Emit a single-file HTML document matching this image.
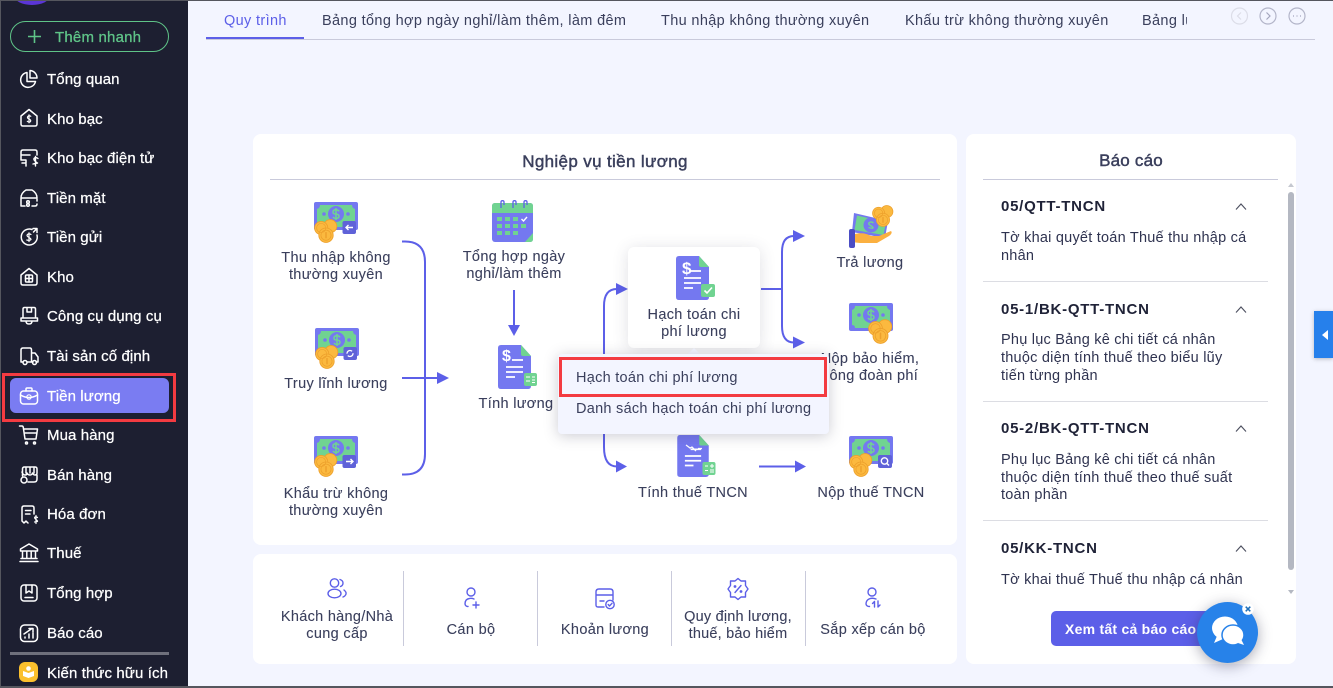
<!DOCTYPE html>
<html lang="vi"><head><meta charset="utf-8"><title>Tiền lương</title>
<style>
*{box-sizing:border-box}
html,body{margin:0;padding:0;width:1333px;height:688px;overflow:hidden;background:#f3f5ff}
body{font-family:"Liberation Sans",sans-serif;font-size:14.5px;color:#3a3f5c;position:relative}
.a{position:absolute}
.t{position:absolute;white-space:nowrap;line-height:20px;height:20px;letter-spacing:.35px}
.c{position:absolute;white-space:nowrap;line-height:20px;height:20px;width:240px;text-align:center;letter-spacing:.33px;-webkit-text-stroke:.1px}
.s{color:#fff;left:47px;margin-top:1px;font-size:15px;-webkit-text-stroke:.25px #fff;letter-spacing:.1px}
.b{-webkit-text-stroke:.3px}
.i{position:absolute;left:18px;width:22px;height:22px;fill:none;stroke:#fff;stroke-width:1.5;stroke-linecap:round;stroke-linejoin:round}
.tab{top:11px;color:#3a3f5c}
.h{color:#1f2237;font-weight:bold;font-size:15px;letter-spacing:.75px;left:1001px}
.d{left:1001px;color:#2f3350;letter-spacing:.23px}
.bi{position:absolute;fill:none;stroke:#5c5fe8;stroke-width:1.4;stroke-linecap:round;stroke-linejoin:round}
</style></head><body>

<svg width="0" height="0" style="position:absolute">
<defs>
<symbol id="coins" viewBox="0 0 20 20" overflow="visible">
<g stroke="#eda02c" stroke-width=".7" fill="#fbb93f"><circle cx="13.500" cy="6" r="5.500"/><circle cx="6" cy="7.500" r="5.500"/><circle cx="10" cy="13.500" r="6"/></g>
<g fill="none" stroke="#eda02c" stroke-width=".6"><circle cx="10" cy="13.500" r="4.200"/><circle cx="6" cy="7.500" r="3.800"/></g>
<rect x="9.400" y="10.800" width="1.200" height="5.400" rx=".6" fill="#eda02c"/>
</symbol>
<symbol id="cash" viewBox="0 0 44 28">
<rect width="44" height="28" rx="2" fill="#7478f0"/>
<path d="M6 3H38Q38 6 41 7V22Q38 22 38 25H6Q6 22 3 22V7Q6 6 6 3Z" fill="#70d391"/>
<circle cx="22" cy="12" r="8" fill="#7478f0"/><circle cx="10" cy="12" r="1.800" fill="#7478f0"/><circle cx="34" cy="12" r="1.800" fill="#7478f0"/>
<path d="M25 9.300Q24 7.800 22 7.800Q19 7.800 19 10T22 12Q25 12.300 25 14.300T22 16.500Q20 16.500 19 15M22 6V18" fill="none" stroke="#70d391" stroke-width="1.500"/>
</symbol>
<symbol id="doc" viewBox="0 0 33 44">
<path d="M3 0H23L33 11V41Q33 44 30 44H3Q0 44 0 41V3Q0 0 3 0Z" fill="#7478f0"/>
<path d="M23 0L33 11H25Q23 11 23 9Z" fill="#70d391"/>
<g stroke="#fff" stroke-width="1.800"><path d="M14 15H25M8 22H25M8 27H25M8 32H17" fill="none"/></g>
</symbol>
</defs>
</svg>

<!-- window frame -->
<div class="a" style="left:0;top:0;width:1333px;height:1px;background:#55565e;z-index:9"></div>
<div class="a" style="left:0;top:686px;width:1333px;height:2px;background:#55565e;z-index:9"></div>
<div class="a" style="left:0;top:0;width:1px;height:688px;background:#55565e;z-index:9"></div>

<!-- SIDEBAR -->
<div class="a" style="left:0;top:0;width:188px;height:688px;background:#1d1f31"></div>
<div class="a" style="left:14px;top:-14px;width:36px;height:19px;border-radius:50%;background:#5b35d6"></div>
<div class="a" style="left:10px;top:21px;width:159px;height:31px;border:1.500px solid #5fc488;border-radius:16px"></div>
<svg class="a" style="left:27px;top:29px" width="15" height="15"><path d="M7.500 1V14M1 7.500H14" stroke="#5fc488" stroke-width="1.600" fill="none"/></svg>
<div class="t b" style="left:55px;top:28px;color:#5fc488;font-size:15px;letter-spacing:.2px">Thêm nhanh</div>

<div class="a" style="left:10px;top:378px;width:159px;height:35px;border-radius:6px;background:#7a7cf2"></div>
<div class="a" style="left:2px;top:373px;width:174px;height:49px;border:3px solid #f33b41"></div>

<svg class="i" style="top:68px" viewBox="0 0 22 22"><path d="M9 4.500A7.500 7.500 0 1 0 17.500 13.500H9Z"/><path d="M12 2.500A7.500 7.500 0 0 1 19 10H12Z"/></svg>
<div class="t s" style="top:69px">Tổng quan</div>
<svg class="i" style="top:107px" viewBox="0 0 22 22"><path d="M3 9L11 2.500L19 9V17Q19 19 17 19H5Q3 19 3 17Z"/><path d="M12.800 9.300Q11 8 9.800 9.500T11 12T12.500 14.500T9.300 14.300M11 7.800V15.800" stroke-width="1.200"/></svg>
<div class="t s" style="top:109px">Kho bạc</div>
<svg class="i" style="top:147px" viewBox="0 0 22 22"><path d="M4 16H8V13H3V5Q3 3 5 3H17Q19 3 19 5V8M3 8H12M8 17V19"/><path d="M20 11.500Q18 10 16.500 11T17 14T19.500 16T15 17M17.500 9.500V19" stroke-width="1.400"/></svg>
<div class="t s" style="top:148px">Kho bạc điện tử</div>
<svg class="i" style="top:187px" viewBox="0 0 22 22"><path d="M3 11Q3 6 8 3H14Q19 6 19 11M3 11H19M3 11V19H7M14 19H17Q19 19 19 17M19 12V14"/><circle cx="10" cy="15" r="1.300"/><circle cx="10" cy="18" r="1.300"/></svg>
<div class="t s" style="top:188px">Tiền mặt</div>
<svg class="i" style="top:226px" viewBox="0 0 22 22"><path d="M14 3.500A8 8 0 1 0 19 9M15 2.500L19 2.500V6.500M19 2.500L15.500 6"/><path d="M13 8.500Q11 7.300 9.500 8.500T11 11.500T12.500 14T8.800 14M11 6.800V15.500" stroke-width="1.200"/></svg>
<div class="t s" style="top:227px">Tiền gửi</div>
<svg class="i" style="top:266px" viewBox="0 0 22 22"><path d="M3 9L11 2.500L19 9V17Q19 19 17 19H5Q3 19 3 17Z"/><rect x="7.500" y="9" width="7" height="7" rx="1"/><path d="M11 9V16M7.500 12.500H14.500"/></svg>
<div class="t s" style="top:267px">Kho</div>
<svg class="i" style="top:305px" viewBox="0 0 22 22"><path d="M5 13V4Q5 2.500 6.500 2.500H16Q17.500 2.500 17.500 4V13M9 2.500V7H13.500V2.500M3 13H19.500V16H3ZM8 16Q8 19 11 19T14 16"/></svg>
<div class="t s" style="top:306px">Công cụ dụng cụ</div>
<svg class="i" style="top:345px" viewBox="0 0 22 22"><path d="M5 17H3V5Q3 3 5 3H12Q13.500 3 13.500 5V17H9M13.500 8H17L20 12V17H18M13.500 17H15"/><circle cx="7" cy="17.500" r="2"/><circle cx="16.500" cy="17.500" r="2"/></svg>
<div class="t s" style="top:346px">Tài sản cố định</div>
<svg class="i" style="top:385px" viewBox="0 0 22 22"><rect x="2.500" y="6" width="17" height="13" rx="3"/><path d="M8 6V4Q8 3 9 3H13Q14 3 14 4V6M2.500 10Q11 15 19.500 10"/><circle cx="11" cy="12" r="2.200" stroke-width="1.100"/></svg>
<div class="t s" style="top:386px">Tiền lương</div>
<svg class="i" style="top:424px" viewBox="0 0 22 22"><path d="M1.500 2H4Q5 2 5.300 3.500L7 15H18L19.500 5H5.500M7 9H19"/><circle cx="8.500" cy="19" r="1"/><circle cx="16.500" cy="19" r="1"/></svg>
<div class="t s" style="top:425px">Mua hàng</div>
<svg class="i" style="top:464px" viewBox="0 0 22 22"><path d="M4.500 12V5Q4.500 3 6.500 3H17Q19 3 19 5V9Q19 11 17 11T14.500 9Q14 11 12 11T9 9Q9 11 7 11T4 8M8 3V9M12 3V9M16 3V9M19 11V15Q19 18 16 18H10"/><circle cx="6" cy="16" r="3"/></svg>
<div class="t s" style="top:465px">Bán hàng</div>
<svg class="i" style="top:503px" viewBox="0 0 22 22"><path d="M4 18V5Q4 3 6 3H14Q16 3 16 5V11M4 18L6 20L8 18L10 20M7.500 7.500H13M7.500 11H12"/><path d="M19.500 14.500Q18 13.300 17 14T17.500 16T19.500 18T16.500 19M18 12.500V20.500" stroke-width="1.200"/></svg>
<div class="t s" style="top:504px">Hóa đơn</div>
<svg class="i" style="top:542px" viewBox="0 0 22 22"><path d="M11 2L19.500 7V9H2.500V7ZM4.500 9.500V16M8.800 9.500V16M13.200 9.500V16M17.500 9.500V16M3 16.500H19M2 19.500H20"/></svg>
<div class="t s" style="top:543px">Thuế</div>
<svg class="i" style="top:582px" viewBox="0 0 22 22"><rect x="3" y="3" width="16" height="16" rx="3"/><path d="M8 3V11L11 9L14 11V3M7 15.500H15"/></svg>
<div class="t s" style="top:583px">Tổng hợp</div>
<svg class="i" style="top:622px" viewBox="0 0 22 22"><rect x="2.500" y="3" width="17" height="16.500" rx="4"/><path d="M6 12L14 6.500M11 6.500H15V10M7 16V15M11 16V12M15 16V11"/></svg>
<div class="t s" style="top:623px">Báo cáo</div>
<div class="a" style="left:10px;top:652px;width:159px;height:3px;background:#6f707c"></div>
<div class="a" style="left:19px;top:662px;width:19px;height:20px;border-radius:6px;background:#fbc02d"></div>
<svg class="a" style="left:19px;top:662px" width="19" height="20"><path d="M4 9L9.500 11V16L4 14ZM15 9L9.500 11V16L15 14Z" fill="#fff"/><circle cx="9.500" cy="6.500" r="2.300" fill="#fff"/></svg>
<div class="t s" style="top:663px">Kiến thức hữu ích</div>

<!-- TABS -->
<div class="a" style="left:206px;top:39px;width:1109px;height:1px;background:#c9cadb"></div>
<div class="a" style="left:206px;top:37px;width:98px;height:2px;background:#5c5fe8"></div>
<div class="t tab" style="left:224px;color:#5c5fe8">Quy trình</div>
<div class="t tab" style="left:322px">Bảng tổng hợp ngày nghỉ/làm thêm, làm đêm</div>
<div class="t tab" style="left:661px">Thu nhập không thường xuyên</div>
<div class="t tab" style="left:905px">Khấu trừ không thường xuyên</div>
<div class="a" style="left:1142px;top:11px;width:45px;height:20px;overflow:hidden"><div class="t" style="left:0;top:0">Bảng lương</div></div>
<svg class="a" style="left:1230px;top:7px" width="90" height="18" fill="none" stroke-width="1.200">
<circle cx="9.500" cy="9" r="8" stroke="#dcdde8"/><path d="M11 5.500L7.500 9L11 12.500" stroke="#dcdde8"/>
<circle cx="38" cy="9" r="8" stroke="#b3b5c9"/><path d="M36.500 5.500L40 9L36.500 12.500" stroke="#a3a5bd"/>
<circle cx="67" cy="9" r="8" stroke="#b3b5c9"/><path d="M63 9H64M66.500 9H67.500M70 9H71" stroke="#a3a5bd"/>
</svg>

<!-- CARDS -->
<div class="a" style="left:253px;top:134px;width:704px;height:411px;background:#fff;border-radius:8px"></div>
<div class="a" style="left:253px;top:554px;width:704px;height:110px;background:#fff;border-radius:8px"></div>
<div class="a" style="left:966px;top:134px;width:330px;height:530px;background:#fff;border-radius:8px"></div>

<div class="c" style="left:485px;top:152px;font-size:17px;letter-spacing:.35px;-webkit-text-stroke:.45px #3a3f5c">Nghiệp vụ tiền lương</div>
<div class="a" style="left:270px;top:179px;width:670px;height:1px;background:#c9cadb"></div>

<!-- connectors -->
<svg class="a" style="left:253px;top:134px" width="704" height="411" fill="none" stroke="#5c5fe8" stroke-width="2">
<g transform="translate(-253 -134)">
<path d="M402 241.500H405Q425 241.500 425 262V454Q425 474.500 405 474.500H402"/>
<path d="M402 378H438"/><path d="M437 372L449 378L437 384Z" fill="#5c5fe8" stroke="none"/>
<path d="M514 290V326"/><path d="M508 325H520L514 336Z" fill="#5c5fe8" stroke="none"/>
<path d="M604 360V306Q604 289 617 289"/><path d="M616 283L628 289L616 295Z" fill="#5c5fe8" stroke="none"/>
<path d="M604 430V447Q604 466.500 617 466.500"/><path d="M616 460.500L627 466.500L616 472.500Z" fill="#5c5fe8" stroke="none"/>
<path d="M761 289H782"/>
<path d="M794 236Q782 236 782 252V326Q782 342.500 794 342.500"/>
<path d="M793 230L805 236L793 242Z" fill="#5c5fe8" stroke="none"/><path d="M793 336.500L805 342.500L793 348.500Z" fill="#5c5fe8" stroke="none"/>
<path d="M759 466.500H796"/><path d="M795 460.500L806 466.500L795 472.500Z" fill="#5c5fe8" stroke="none"/>
</g></svg>

<!-- highlighted card -->
<div class="a" style="left:628px;top:247px;width:132px;height:101px;background:#fff;border-radius:6px;box-shadow:0 2px 16px rgba(60,60,90,.16)"></div>

<!-- diagram icons -->
<svg class="a" style="left:314px;top:202px" width="44" height="42" overflow="visible">
<use href="#cash" width="44" height="28"/><use href="#coins" x="0" y="17" width="24" height="24"/>
<rect x="28.500" y="19" width="13.500" height="13" rx="2" fill="#5f62d8"/><path d="M39 25.500H32M34.500 23L32 25.500L34.500 28" stroke="#fff" stroke-width="1.400" fill="none"/></svg>
<svg class="a" style="left:315px;top:328px" width="44" height="42" overflow="visible">
<use href="#cash" width="44" height="28"/><use href="#coins" x="0" y="17" width="24" height="24"/>
<rect x="28.500" y="19" width="13.500" height="13" rx="2" fill="#5f62d8"/><circle cx="35" cy="25.500" r="3" fill="none" stroke="#fff" stroke-width="1.300" stroke-dasharray="7 2"/></svg>
<svg class="a" style="left:314px;top:436px" width="44" height="42" overflow="visible">
<use href="#cash" width="44" height="28"/><use href="#coins" x="0" y="17" width="24" height="24"/>
<rect x="28.500" y="19" width="13.500" height="13" rx="2" fill="#5f62d8"/><path d="M32 25.500H39M36.500 23L39 25.500L36.500 28" stroke="#fff" stroke-width="1.400" fill="none"/></svg>

<svg class="a" style="left:492px;top:200px" width="42" height="42">
<rect x="0" y="3" width="41" height="39" rx="3" fill="#7478f0"/><path d="M0 13V6Q0 3 3 3H38Q41 3 41 6V13Z" fill="#70d391"/>
<g fill="none" stroke="#5c5fe8" stroke-width="1.300"><path d="M10 8V2Q10 0.700 11.500 0.700T13 2V5M22 8V2Q22 0.700 23.500 0.700T25 2V5M33 8V2Q33 0.700 34.500 0.700T36 2V5" transform="translate(-1 0)"/></g>
<g fill="#70d391"><rect x="5" y="17" width="5" height="4"/><rect x="13" y="17" width="5" height="4"/><rect x="21" y="17" width="5" height="4"/><rect x="5" y="24" width="5" height="4"/><rect x="13" y="24" width="5" height="4"/><rect x="21" y="24" width="5" height="4"/><rect x="29" y="24" width="5" height="4"/><rect x="5" y="31" width="5" height="4"/><rect x="13" y="31" width="5" height="4"/><rect x="21" y="31" width="5" height="4"/></g>
<path d="M29.500 19L31.500 21L35 17" stroke="#fff" stroke-width="1.400" fill="none"/><path d="M41 33V39Q41 42 38 42H33Z" fill="#70d391"/></svg>

<svg class="a" style="left:498px;top:345px" width="40" height="44" overflow="visible">
<use href="#doc" width="33" height="44"/><text x="4" y="16" font-size="16" font-weight="bold" fill="#fff" font-family="Liberation Sans">$</text>
<rect x="26" y="28" width="13" height="13" rx="2" fill="#70d391"/><path d="M28 32H32M34 32H37M28 36H32M34 35H37M34 37.500H37" stroke="#fff" stroke-width="1"/></svg>

<svg class="a" style="left:676px;top:256px" width="40" height="44" overflow="visible">
<use href="#doc" width="33" height="44"/><text x="6" y="18" font-size="17" font-weight="bold" fill="#fff" font-family="Liberation Sans">$</text>
<rect x="25" y="28" width="14" height="13" rx="2" fill="#70d391"/><path d="M28.500 34.500L31 37L36 31.500" stroke="#fff" stroke-width="1.600" fill="none"/></svg>

<svg class="a" style="left:849px;top:205px" width="46" height="46" overflow="visible">
<path d="M5 8L39 16L36 33L3 27Z" fill="#7478f0"/><path d="M8 10.500L37 17L34.500 30L5.500 25Z" fill="#70d391"/>
<circle cx="22" cy="20" r="7.500" fill="#7478f0"/><path d="M24.500 18Q22.500 16.300 20.500 17.500T21.500 20.500T24 23T19.500 22.500" stroke="#70d391" fill="none" stroke-width="1.400"/>
<path d="M2 30Q14 26 22 31H30L42 26Q44 28 40 31L28 38H11L2 37Z" fill="#fbb040"/>
<rect x="0" y="24" width="6" height="19" rx="2" fill="#4b4dc4"/>
<use href="#coins" x="23" y="0" width="22" height="22"/></svg>

<svg class="a" style="left:849px;top:303px" width="44" height="42" overflow="visible">
<use href="#cash" width="44" height="28"/><use href="#coins" x="19" y="16" width="25" height="25"/></svg>

<svg class="a" style="left:677px;top:435px" width="40" height="44" overflow="visible">
<use href="#doc" width="32" height="42"/><path d="M9 10L13 13L15 12L19 16M21 13.500H25" stroke="#fff" stroke-width="1.300" fill="none"/>
<rect x="25.500" y="27" width="13" height="13" rx="2" fill="#70d391"/><path d="M28 31H31M33 31H37M35 29V33M28 35.500H31M33 35H37M33 37H37" stroke="#fff" stroke-width="1"/></svg>

<svg class="a" style="left:849px;top:436px" width="44" height="42" overflow="visible">
<use href="#cash" width="44" height="28"/><use href="#coins" x="0" y="17" width="24" height="24"/>
<rect x="29" y="19" width="14" height="13" rx="2" fill="#5f62d8"/><circle cx="35.500" cy="25" r="3.200" fill="none" stroke="#fff" stroke-width="1.400"/><path d="M38 27.500L40 29.500" stroke="#fff" stroke-width="1.400"/></svg>

<!-- diagram labels -->
<div class="c" style="left:216px;top:248px">Thu nhập không</div>
<div class="c" style="left:216px;top:265px">thường xuyên</div>
<div class="c" style="left:216px;top:374px">Truy lĩnh lương</div>
<div class="c" style="left:216px;top:484px">Khẩu trừ không</div>
<div class="c" style="left:216px;top:501px">thường xuyên</div>
<div class="c" style="left:394px;top:247px">Tổng hợp ngày</div>
<div class="c" style="left:394px;top:264px">nghỉ/làm thêm</div>
<div class="c" style="left:396px;top:394px">Tính lương</div>
<div class="c" style="left:574px;top:305px">Hạch toán chi</div>
<div class="c" style="left:574px;top:322px">phí lương</div>
<div class="c" style="left:750px;top:253px">Trả lương</div>
<div class="c" style="left:750px;top:349px">Nộp bảo hiểm,</div>
<div class="c" style="left:750px;top:366px">công đoàn phí</div>
<div class="c" style="left:573px;top:483px">Tính thuế TNCN</div>
<div class="c" style="left:751px;top:483px">Nộp thuế TNCN</div>

<!-- popup -->
<div class="a" style="left:687px;top:348px;width:0;height:0;border-left:7px solid transparent;border-right:7px solid transparent;border-bottom:7px solid #f3f5ff"></div>
<div class="a" style="left:558px;top:354px;width:271px;height:80px;background:#f3f5ff;border-radius:4px;box-shadow:0 2px 14px rgba(50,50,80,.25)"></div>
<div class="a" style="left:559px;top:357px;width:268px;height:40px;border:3px solid #f33b41"></div>
<div class="t" style="left:576px;top:368px;letter-spacing:.27px">Hạch toán chi phí lương</div>
<div class="t" style="left:576px;top:399px;letter-spacing:.27px">Danh sách hạch toán chi phí lương</div>

<!-- bottom card -->
<div class="a" style="left:403px;top:571px;width:1px;height:75px;background:#c9cadb"></div>
<div class="a" style="left:537px;top:571px;width:1px;height:75px;background:#c9cadb"></div>
<div class="a" style="left:671px;top:571px;width:1px;height:75px;background:#c9cadb"></div>
<div class="a" style="left:805px;top:571px;width:1px;height:75px;background:#c9cadb"></div>

<svg class="bi" style="left:325px;top:577px" width="24" height="24" viewBox="0 0 24 24"><circle cx="9.500" cy="6" r="4.200"/><ellipse cx="9.500" cy="16.500" rx="6.500" ry="4.300"/><path d="M15 2.500Q18 3.500 18 6T15.500 9.500M19 13Q21.500 15 21 17T18 20"/></svg>
<svg class="bi" style="left:459px;top:586px" width="24" height="24" viewBox="0 0 24 24"><circle cx="12" cy="6" r="4"/><path d="M15 13Q12.500 12 10.500 12.500Q6 13 6 18Q6.500 20.500 9 20.500M14 19H20M17 16V22"/></svg>
<svg class="bi" style="left:594px;top:587px" width="22" height="24" viewBox="0 0 22 24"><path d="M10 20H4Q2 20 2 18V5Q2 2 5 2H16Q19 2 19 5V13M2 8H19M6 14H10"/><circle cx="16" cy="17.500" r="4.200"/><path d="M14.200 17.500L15.500 19L18 16.300"/></svg>
<svg class="bi" style="left:726px;top:577px" width="24" height="24" viewBox="0 0 24 24"><path d="M12 1.500L15 4H19.500V8.500L22 12L19.500 15.500V20H15L12 22.500L9 20H4.500V15.500L2 12L4.500 8.500V4H9Z"/><path d="M9 15.500L15 8.500"/><circle cx="9" cy="9.500" r=".7"/><circle cx="15" cy="14.500" r=".7"/></svg>
<svg class="bi" style="left:860px;top:586px" width="24" height="24" viewBox="0 0 24 24"><circle cx="12" cy="6" r="4"/><path d="M16 13Q12 11.500 9 13Q6 14.500 6 18Q6.500 20.500 9.500 20.500M14.500 21V15.500L12.500 17.500M18 15V21L20 19"/></svg>

<div class="c" style="left:217px;top:607px;letter-spacing:.3px">Khách hàng/Nhà</div>
<div class="c" style="left:217px;top:624px">cung cấp</div>
<div class="c" style="left:351px;top:620px">Cán bộ</div>
<div class="c" style="left:485px;top:620px">Khoản lương</div>
<div class="c" style="left:618px;top:607px;letter-spacing:.2px">Quy định lương,</div>
<div class="c" style="left:618px;top:624px;letter-spacing:.2px">thuế, bảo hiểm</div>
<div class="c" style="left:753px;top:620px">Sắp xếp cán bộ</div>

<!-- report panel -->
<div class="c" style="left:1011px;top:151px;font-size:17px;letter-spacing:.2px;-webkit-text-stroke:.45px #3a3f5c">Báo cáo</div>
<div class="a" style="left:983px;top:179px;width:295px;height:1px;background:#c9cadb"></div>
<div class="a" style="left:1288px;top:192px;width:6px;height:378px;border-radius:3px;background:#b4b8c2"></div>
<div class="a" style="left:1288px;top:183px;width:0;height:0;border-left:3px solid transparent;border-right:3px solid transparent;border-bottom:4px solid #c5c8d0"></div>
<div class="a" style="left:1288px;top:590px;width:0;height:0;border-left:3px solid transparent;border-right:3px solid transparent;border-top:4px solid #b4b8c2"></div>

<div class="t h" style="top:197px">05/QTT-TNCN</div>
<div class="t d" style="top:228px">Tờ khai quyết toán Thuế thu nhập cá</div>
<div class="t d" style="top:246px">nhân</div>
<div class="a" style="left:983px;top:281px;width:285px;height:1px;background:#dcdde3"></div>
<div class="t h" style="top:300px">05-1/BK-QTT-TNCN</div>
<div class="t d" style="top:330px">Phụ lục Bảng kê chi tiết cá nhân</div>
<div class="t d" style="top:348px">thuộc diện tính thuế theo biểu lũy</div>
<div class="t d" style="top:366px">tiến từng phần</div>
<div class="a" style="left:983px;top:401px;width:285px;height:1px;background:#dcdde3"></div>
<div class="t h" style="top:419px">05-2/BK-QTT-TNCN</div>
<div class="t d" style="top:450px">Phụ lục Bảng kê chi tiết cá nhân</div>
<div class="t d" style="top:468px">thuộc diện tính thuế theo thuế suất</div>
<div class="t d" style="top:485px">toàn phần</div>
<div class="a" style="left:983px;top:520px;width:285px;height:1px;background:#dcdde3"></div>
<div class="t h" style="top:539px">05/KK-TNCN</div>
<div class="t d" style="top:570px">Tờ khai thuế Thuế thu nhập cá nhân</div>
<svg class="a" style="left:1235px;top:200px" width="12" height="360" fill="none" stroke="#4c4f5f" stroke-width="1.100"><path d="M1 9.500L6 4L11 9.500M1 112.500L6 107L11 112.500M1 231.500L6 226L11 231.500M1 351.500L6 346L11 351.500"/></svg>

<div class="a" style="left:1051px;top:611px;width:160px;height:35px;background:#5c5fe8;border-radius:5px"></div>
<div class="t" style="left:1065px;top:619px;color:#fff;font-size:14px;font-weight:bold;letter-spacing:.25px">Xem tất cả báo cáo</div>

<!-- right tab -->
<div class="a" style="left:1314px;top:311px;width:19px;height:47px;background:#2680eb;box-shadow:0 1px 4px rgba(0,0,0,.25)"></div>
<div class="a" style="left:1322px;top:330px;width:0;height:0;border-top:5px solid transparent;border-bottom:5px solid transparent;border-right:6px solid #fff"></div>

<!-- chat bubble -->
<div class="a" style="left:1197px;top:602px;width:61px;height:61px;border-radius:50%;background:#2782e9;box-shadow:0 3px 14px rgba(40,40,70,.4)"></div>
<svg class="a" style="left:1209px;top:614px" width="40" height="36" fill="#fff">
<ellipse cx="16" cy="14" rx="13" ry="11.500"/><path d="M8 22L5 29L14 25Z"/>
<ellipse cx="24" cy="21" rx="11" ry="10" stroke="#2782e9" stroke-width="1.500"/><path d="M29 29L35 31L32 25Z"/></svg>
<svg class="a" style="left:1242px;top:603px" width="12" height="12"><circle cx="6" cy="6" r="5.800" fill="#fff"/><path d="M3.700 3.700L8.300 8.300M8.300 3.700L3.700 8.300" stroke="#1f6fb8" stroke-width="1.500"/></svg>

</body></html>
